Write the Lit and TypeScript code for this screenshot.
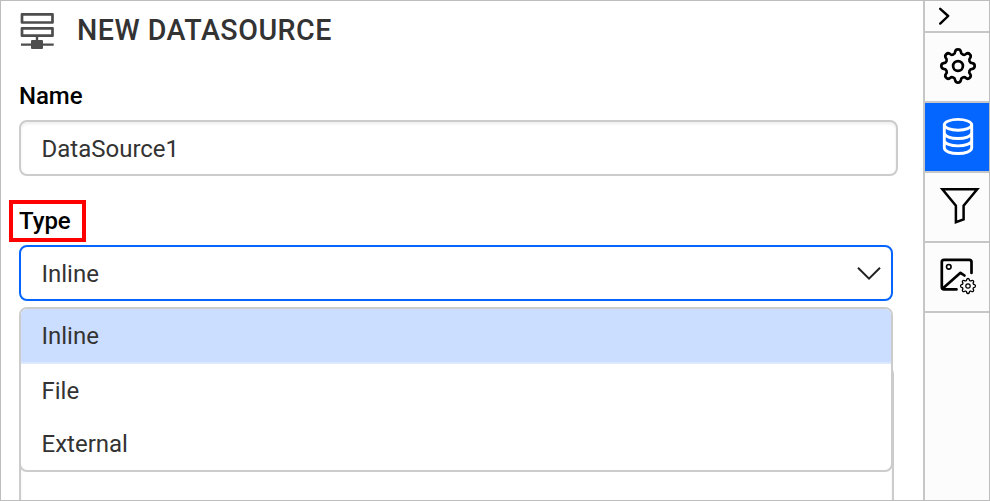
import { LitElement, html, svg, css } from "lit";
import { customElement } from "lit/decorators.js";

/** Closed outline of a cog with eight round teeth, alternating outward and inward arcs. */
function cogPath(cx: number, cy: number, r: number, tip: number, valley: number): string {
  let d = "";
  for (let i = 0; i <= 16; i++) {
    const a = ((i * 22.5 - 101.25) * Math.PI) / 180;
    const x = (cx + r * Math.cos(a)).toFixed(2);
    const y = (cy + r * Math.sin(a)).toFixed(2);
    d += i === 0 ? `M${x} ${y}` : i % 2 ? `A${tip} ${tip} 0 0 1 ${x} ${y}` : `A${valley} ${valley} 0 0 0 ${x} ${y}`;
  }
  return d + "Z";
}

const icons = {
  chevron: svg`<path d="M15.2 7.8 23.2 15 15.2 22.6" stroke-width="2.4" />`,
  gear: svg`<path d=${cogPath(33, 33, 14.6, 2.9, 3.1)} stroke-width="2.7" /><circle cx="33" cy="33" r="4.9" stroke-width="2.7" />`,
  database: svg`<g stroke-width="2.9"><ellipse cx="33" cy="21.8" rx="13.7" ry="5.4" />
    <path d="M19.3 21.8V44.8C19.3 52.4 46.7 52.4 46.7 44.8V21.8M19.3 29.8C19.3 37.4 46.7 37.4 46.7 29.8M19.3 37.2C19.3 44.8 46.7 44.8 46.7 37.2" /></g>`,
  filter: svg`<path d="M17.4 16.3H52.2L38.6 32.6V46.4L30.9 49.2V32.6Z" stroke-width="2.5" stroke-linejoin="miter" />`,
  image: svg`<path d="M46.5 30V19Q46.5 16.8 44.3 16.8H19Q16.8 16.8 16.8 19V44Q16.8 46.4 19 46.4H31.5M18 45.2 35.5 29.8 39.5 32.5" stroke-width="2.7" />
    <circle cx="23.8" cy="23.8" r="2.3" stroke-width="1.6" />
    <path d=${cogPath(43, 43, 6.6, 1.33, 1.4)} stroke-width="1.3" /><circle cx="43" cy="43" r="2.2" stroke-width="1.2" />`,
};

@customElement("side-bar")
class SideBar extends LitElement {
  static styles = css`
    :host { display: flex; flex-direction: column; flex: none; width: 66px; box-sizing: border-box; border-left: 2px solid #c6c6c6; background: #fcfcfc; }
    .cell { height: 68px; border-bottom: 2px solid #c6c6c6; color: #000; }
    .cell.small { height: 30px; }
    .cell.active { background: #0565ff; color: #fff; }
    svg { display: block; width: 64px; height: 100%; fill: none; stroke: currentColor; stroke-linecap: round; stroke-linejoin: round; }
  `;
  render() {
    return html`
      <div class="cell small"><svg viewBox="0 0 64 30">${icons.chevron}</svg></div>
      <div class="cell"><svg viewBox="0 0 64 68">${icons.gear}</svg></div>
      <div class="cell active"><svg viewBox="0 0 64 68">${icons.database}</svg></div>
      <div class="cell"><svg viewBox="0 0 64 68">${icons.filter}</svg></div>
      <div class="cell"><svg viewBox="0 0 64 68">${icons.image}</svg></div>
    `;
  }
}

@customElement("app-root")
class AppRoot extends LitElement {
  static styles = css`
    :host { display: flex; box-sizing: border-box; width: 990px; height: 501px; border: 1px solid #bdbdbd; background: #fff; overflow: hidden; font-family: Roboto, sans-serif; color: #333; }
    * { box-sizing: border-box; }
    .panel { flex: 1; min-width: 0; padding-left: 18px; display: flex; flex-direction: column; }
    .panel > * { flex-shrink: 0; }
    .head { display: flex; align-items: center; height: 60px; }
    .head svg { width: 36px; height: 40px; fill: none; stroke: #4d4d4d; }
    h1 { margin: 0 0 0 22px; font-size: 28.6px; font-weight: 500; line-height: 58px; padding-bottom: 2px; letter-spacing: 0.5px; white-space: nowrap; }
    .label { font-size: 24px; font-weight: 500; color: #000; line-height: 28px; letter-spacing: -0.05px; white-space: nowrap; }
    .name { margin-top: 21px; }
    .field { display: flex; align-items: center; height: 56px; padding: 0 9px 0 20.5px; border: 2px solid #ccc; border-radius: 8px; font-size: 24px; background: #fff; }
    .field span { padding-top: 2px; }
    .input { width: 879px; margin-top: 10px; box-shadow: inset 0 2px 3px #0001; }
    .mark { width: 77px; height: 42px; margin: 24px 0 0 -10px; padding: 3px 0 0 6px; border: 4px solid #f00; }
    .select { width: 874px; margin-top: 3px; border-color: #0565ff; justify-content: space-between; }
    .select svg { width: 26px; height: 20px; fill: none; stroke: #222; stroke-width: 2; }
    .below { position: relative; flex: 1 0 0; padding-top: 65px; }
    .box { width: 875px; height: 160px; border: 2px solid #ccc; border-radius: 8px; box-shadow: inset 0 2px 3px #0001; }
    .menu { position: absolute; left: 0; top: 6px; width: 874px; height: 165px; border: 2px solid #ccc; border-radius: 8px; overflow: hidden; background: #fff; font-size: 24px; }
    .option { height: 53px; line-height: 55px; padding-left: 20.5px; }
    .option.selected { height: 55px; background: #ccdeff; border-bottom: 2px solid #dde9ff; }
  `;
  render() {
    return html`
      <div class="panel">
        <div class="head">
          <svg viewBox="0 0 36 40">
            <path d="M3 3.3H33.5V11.5H3ZM3 17.3H33.5V24.7H3Z" stroke-width="2.7" stroke-linejoin="round" />
            <path d="M18 25V30M2 33.6H34.7" stroke-width="2.4" />
            <rect x="12" y="29" width="12" height="9" rx="1" fill="#4d4d4d" stroke="none" />
          </svg>
          <h1>NEW DATASOURCE</h1>
        </div>
        <div class="label name">Name</div>
        <div class="field input"><span>DataSource1</span></div>
        <div class="label mark">Type</div>
        <div class="field select">
          <span>Inline</span>
          <svg viewBox="0 0 26 20"><path d="M2 4.8 13 15.6 24 4.8" /></svg>
        </div>
        <div class="below">
          <div class="box"></div>
          <div class="menu">
            <div class="option selected">Inline</div>
            <div class="option">File</div>
            <div class="option">External</div>
          </div>
        </div>
      </div>
      <side-bar></side-bar>
    `;
  }
}
